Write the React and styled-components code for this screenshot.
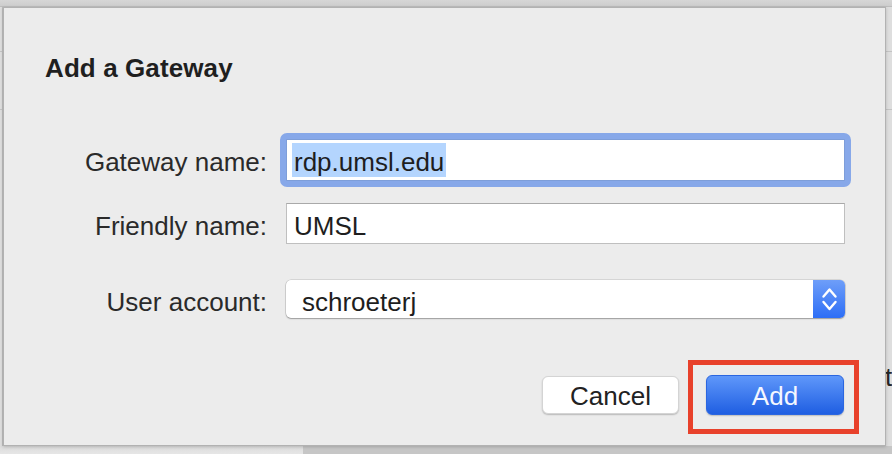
import React from "react";
import styled, { createGlobalStyle } from "styled-components";

const Global = createGlobalStyle`
  html, body { margin: 0; padding: 0; background: #d8d8d8; }
  body { font-family: "Liberation Sans", Arial, sans-serif; -webkit-font-smoothing: antialiased; }
`;

const Screen = styled.div`
  width: 892px;
  height: 454px;
  display: grid;
  grid-template-columns: 3px 883px 6px;
  grid-template-rows: 7px 439px 8px;
  overflow: hidden;
  background: #dadada;
`;

const TopBar = styled.div`
  grid-column: 1 / -1;
  background: linear-gradient(#d6d6d6, #cdcdcd);
  border-bottom: 1px solid #bdbdbd;
  box-sizing: border-box;
`;

const SideEdge = styled.div`
  background:
    linear-gradient(#c4c4c4, #c4c4c4) 0 44px / 100% 1px no-repeat,
    linear-gradient(#c4c4c4, #c4c4c4) 0 102px / 100% 1px no-repeat,
    #dedede;
  border-right: ${(p) => (p.$left ? "1px solid #bdbdbd" : "none")};
  box-sizing: border-box;
  position: relative;
  overflow: visible;
  font-size: 26px;
  color: #262626;
`;

const BackText = styled.span`
  position: absolute;
  left: -1px;
  top: 355px;
  line-height: 30px;
`;

const BottomEdge = styled.div`
  grid-column: 1 / -1;
  background:
    linear-gradient(#c6c6c6, #c6c6c6) 303px 0 / 100% 100% no-repeat,
    linear-gradient(#dcdcdc, #e6e6e6);
`;

const Dialog = styled.div`
  background: #ececec;
  border: 1px solid #b2b2b2;
  box-sizing: border-box;
  box-shadow: 0 1px 3px rgba(0, 0, 0, 0.18);
  padding: 45px 40px 0 41px;
  display: flex;
  flex-direction: column;
  position: relative;
  z-index: 1;
`;

const Title = styled.h1`
  margin: 0 0 56px;
  font-size: 26px;
  line-height: 30px;
  font-weight: 700;
  color: #1f1f1f;
  letter-spacing: 0.1px;
`;

const Row = styled.div`
  display: flex;
  align-items: baseline;
  gap: 19px;
  margin-top: ${(p) => p.$gap || 0}px;
`;

const Label = styled.label`
  width: 222px;
  text-align: right;
  font-size: 26px;
  line-height: 30px;
  color: #2a2a2a;
  white-space: nowrap;
`;

const Field = styled.div`
  position: relative;
  width: 559px;
  height: ${(p) => p.$h}px;
  box-sizing: border-box;
  background: #fff;
  border: 1px solid ${(p) => (p.$focused ? "#7e9ed9" : "#bfbfbf")};
  border-top-color: ${(p) => (p.$focused ? "#7e9ed9" : "#a9a9a9")};
  padding: 5px 0 0 5px;
  font-size: 26px;
  line-height: 34px;
  color: #1e1e1e;
  white-space: nowrap;

  ${(p) =>
    p.$focused &&
    `
    &::before {
      content: "";
      position: absolute;
      inset: -7px;
      border: 6px solid #87a8e9;
      border-radius: 7px;
      pointer-events: none;
    }
  `}
`;

const Selected = styled.span`
  background: #b4d5fe;
  padding: 4px 2px 0;
`;

const PlainText = styled.span`
  padding-left: 2px;
`;

const Select = styled.div`
  width: 559px;
  height: 38px;
  box-sizing: border-box;
  display: flex;
  background: #fff;
  border-radius: 5px;
  box-shadow: 0 0 0 0.5px rgba(0, 0, 0, 0.18), 0 1px 1.5px rgba(0, 0, 0, 0.28);
  font-size: 26px;
  line-height: 34px;
  color: #1e1e1e;
`;

const SelectValue = styled.span`
  flex: 1;
  padding: 5px 0 0 16px;
`;

const Stepper = styled.span`
  width: 32px;
  align-self: stretch;
  border-radius: 0 5px 5px 0;
  background: linear-gradient(#6e9ef9, #2d6ef6);
  display: flex;
  align-items: center;
  justify-content: center;
`;

const Buttons = styled.div`
  display: flex;
  justify-content: flex-end;
  align-items: center;
  gap: 27px;
  margin-top: 57px;
  padding-right: 1px;
`;

const Button = styled.button`
  height: ${(p) => (p.$primary ? 40 : 38)}px;
  width: ${(p) => (p.$primary ? 138 : 137)}px;
  box-sizing: border-box;
  border-radius: 6px;
  font-family: inherit;
  font-size: 26px;
  line-height: 30px;
  padding: 2px 0 0;
  cursor: default;
  color: ${(p) => (p.$primary ? "#f4f7ff" : "#222")};
  border: ${(p) => (p.$primary ? "1px solid #2b66e0" : "1px solid #d4d4d4")};
  background: ${(p) =>
    p.$primary ? "linear-gradient(#5f97fa, #1f5ee2)" : "#ffffff"};
  box-shadow: ${(p) =>
    p.$primary
      ? "0 1px 1.5px rgba(0,0,0,0.2)"
      : "0 1px 1.5px rgba(0,0,0,0.22)"};
`;

const Highlight = styled.span`
  position: relative;
  display: inline-flex;
`;

const AnnotationFrame = styled.span`
  position: absolute;
  left: -18px;
  right: -15px;
  top: -15px;
  bottom: -19px;
  border: 5px solid #e8412b;
  pointer-events: none;
`;

function Chevrons() {
  return (
    <svg width="32" height="38" viewBox="0 0 32 38" fill="none">
      <path
        d="M10.5 16.5 L16.5 9.5 L22.5 16.5"
        stroke="#fff"
        strokeWidth="2.4"
        strokeLinecap="round"
        strokeLinejoin="round"
      />
      <path
        d="M10.5 22 L16.5 29 L22.5 22"
        stroke="#fff"
        strokeWidth="2.4"
        strokeLinecap="round"
        strokeLinejoin="round"
      />
    </svg>
  );
}

export default function App() {
  return (
    <>
      <Global />
      <Screen>
        <TopBar />
        <SideEdge $left />
        <Dialog>
          <Title>Add a Gateway</Title>
          <Row>
            <Label>Gateway name:</Label>
            <Field $h={42} $focused>
              <Selected>rdp.umsl.edu</Selected>
            </Field>
          </Row>
          <Row $gap={22}>
            <Label>Friendly name:</Label>
            <Field $h={41}>
              <PlainText>UMSL</PlainText>
            </Field>
          </Row>
          <Row $gap={36}>
            <Label>User account:</Label>
            <Select>
              <SelectValue>schroeterj</SelectValue>
              <Stepper>
                <Chevrons />
              </Stepper>
            </Select>
          </Row>
          <Buttons>
            <Button>Cancel</Button>
            <Highlight>
              <Button $primary>Add</Button>
              <AnnotationFrame />
            </Highlight>
          </Buttons>
        </Dialog>
        <SideEdge>
          <BackText>t</BackText>
        </SideEdge>
        <BottomEdge />
      </Screen>
    </>
  );
}
